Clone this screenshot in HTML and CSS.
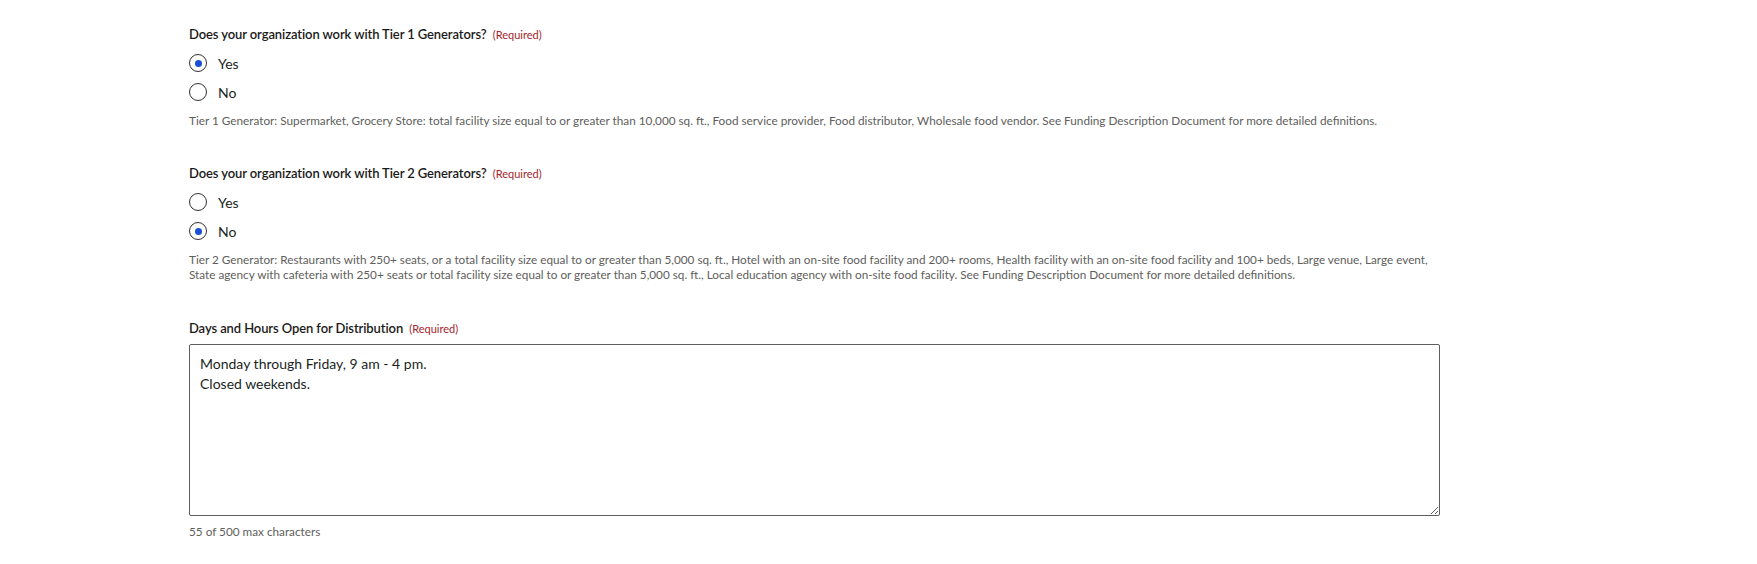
FILE: index.html
```html
<!DOCTYPE html>
<html lang="en">

<head>
  <meta charset="UTF-8">
  <title>Application</title>
  <link rel="stylesheet" href="styles.css">
</head>

<body>
  <div class="container">

    <div class="field first">
      <div class="label">Does your organization work with Tier 1 Generators? <span class="req">(Required)</span></div>
      <div class="choices">
        <label class="choice"><span class="radio checked"></span>Yes</label>
        <label class="choice"><span class="radio"></span>No</label>
      </div>
      <p class="help">Tier 1 Generator: Supermarket, Grocery Store: total facility size equal to or greater than 10,000 sq. ft., Food service provider, Food distributor, Wholesale food vendor. See Funding Description Document for more detailed definitions.</p>
    </div>

    <div class="field">
      <div class="label">Does your organization work with Tier 2 Generators? <span class="req">(Required)</span></div>
      <div class="choices">
        <label class="choice"><span class="radio"></span>Yes</label>
        <label class="choice"><span class="radio checked"></span>No</label>
      </div>
      <p class="help">Tier 2 Generator: Restaurants with 250+ seats, or a total facility size equal to or greater than 5,000 sq. ft., Hotel with an on-site food facility and 200+ rooms, Health facility with an on-site food facility and 100+ beds, Large venue, Large event, State agency with cafeteria with 250+ seats or total facility size equal to or greater than 5,000 sq. ft., Local education agency with on-site food facility. See Funding Description Document for more detailed definitions.</p>
    </div>

    <div class="field last">
      <div class="label">Days and Hours Open for Distribution <span class="req">(Required)</span></div>
      <textarea id="hours">Monday through Friday, 9 am - 4 pm.
Closed weekends.</textarea>
      <p class="help counter">55 of 500 max characters</p>
    </div>

  </div>
</body>

</html>
```

FILE: styles.css
```css
body {
  margin: 0;
  font-family: Lato, "Open Sans", sans-serif;
  background: #fff;
  color: #201f1e;
}

.container {
  width: 1251px;
  margin-left: 189px;
  padding-top: 24px;
}

.field {
  margin-bottom: 36px;
}

.field.first {
  margin-bottom: 35px;
}

.field.last {
  margin-bottom: 0;
}

.label {
  font-size: 13px;
  font-weight: 600;
  letter-spacing: -0.1px;
  line-height: 20px;
  color: #1b1a19;
}

.req {
  font-size: 11px;
  font-weight: 400;
  letter-spacing: 0;
  color: #a4262c;
  margin-left: 3px;
}

.choices {
  display: flex;
  flex-direction: column;
  gap: 7px;
  margin-top: 7px;
}

.choice {
  display: flex;
  align-items: center;
  height: 22px;
  font-size: 14px;
  color: #201f1e;
}

.radio {
  width: 18px;
  height: 18px;
  border: 1px solid #323130;
  border-radius: 50%;
  margin-right: 11px;
  position: relative;
  box-sizing: border-box;
}

.radio.checked::after {
  content: "";
  position: absolute;
  left: 4.5px;
  top: 4.5px;
  width: 7px;
  height: 7px;
  border-radius: 50%;
  background: #1a4fd8;
}

.help {
  margin: 10px 0 0;
  font-size: 11.75px;
  line-height: 15px;
  color: #605e5c;
}

#hours {
  display: block;
  width: 100%;
  height: 172px;
  margin-top: 5px;
  box-sizing: border-box;
  border: 1px solid #605e5c;
  border-radius: 2px;
  padding: 9px 10px;
  font-family: Lato, "Open Sans", sans-serif;
  font-size: 14px;
  line-height: 20px;
  color: #201f1e;
  resize: vertical;
}

.counter {
  margin-top: 8px;
}
```
